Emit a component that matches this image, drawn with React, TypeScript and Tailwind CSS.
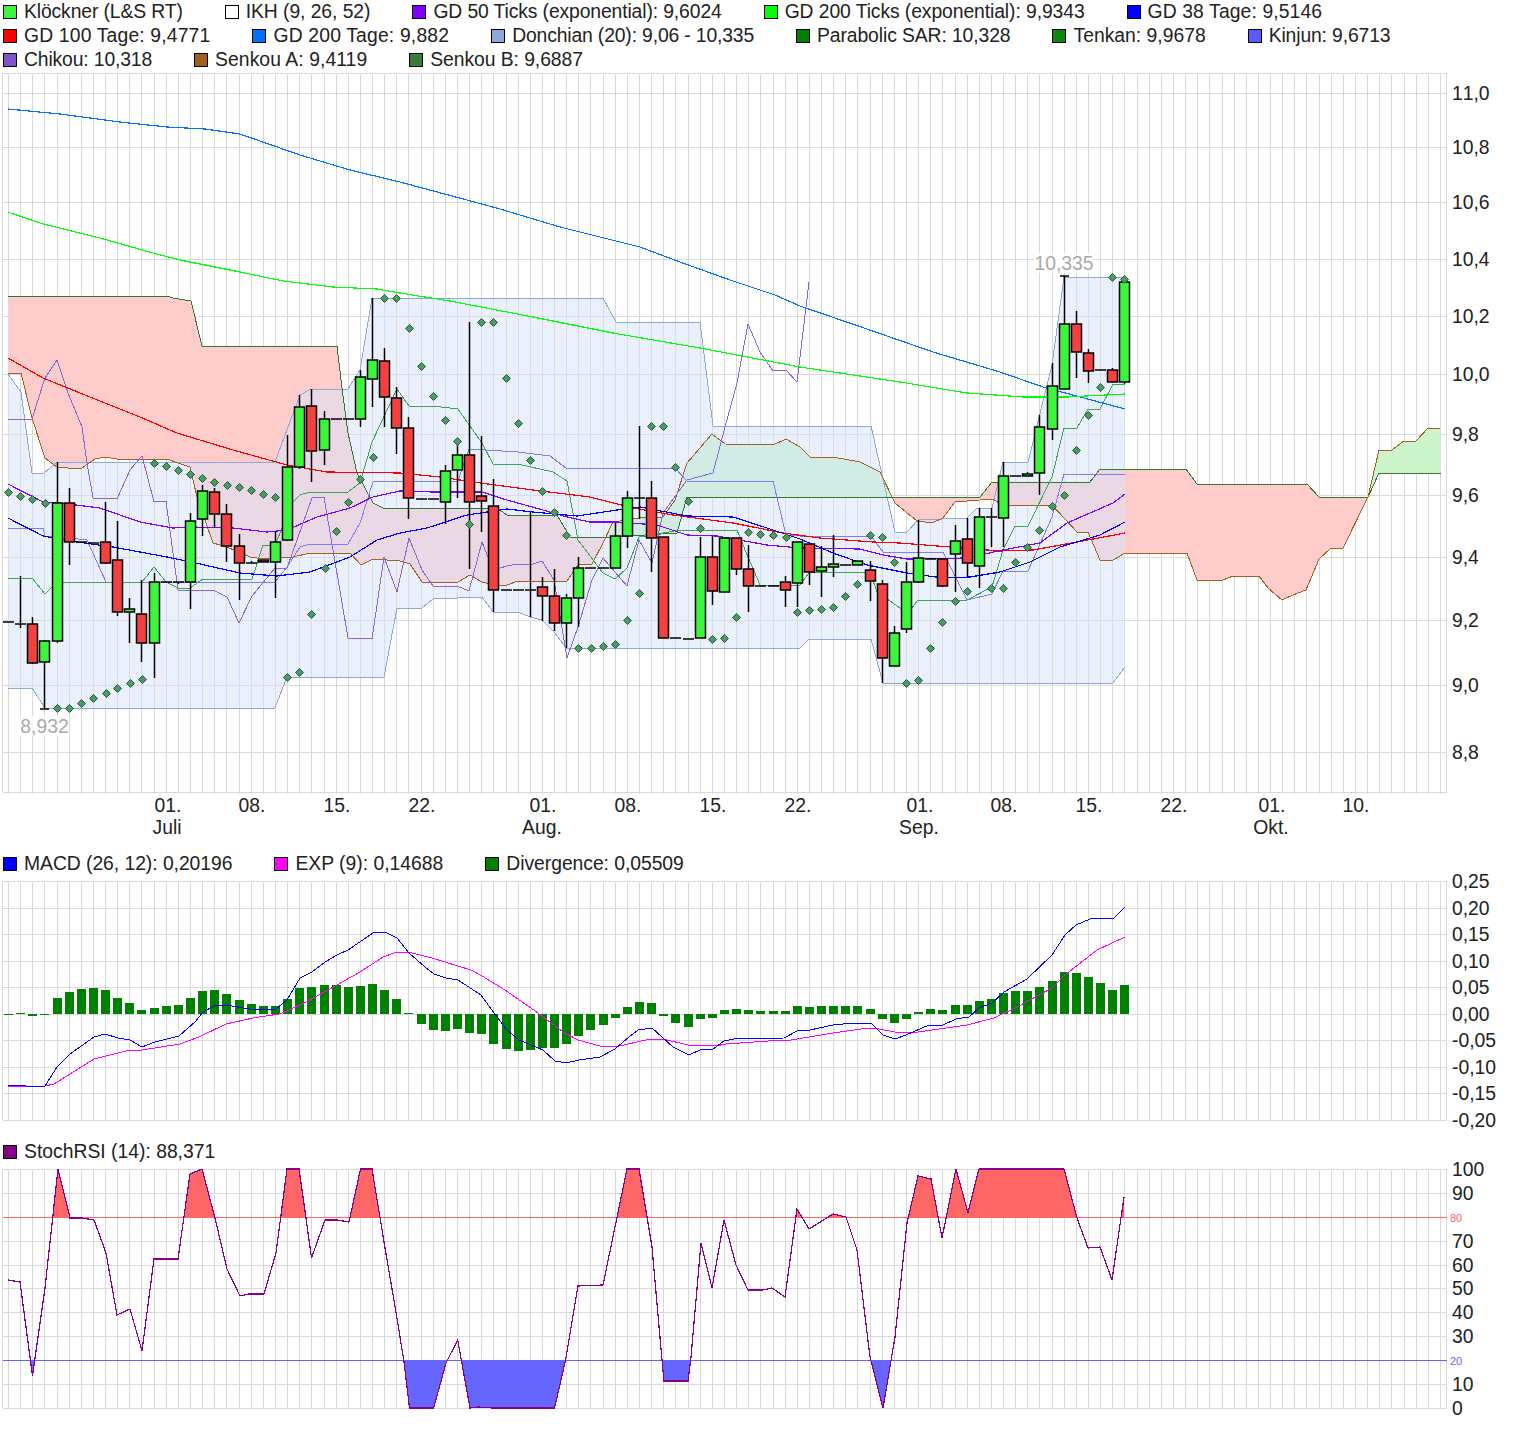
import React from 'react';

const X = (i: number) => Math.round(8 + 12.135 * i) + 0.5;
const pts = (a: number[]) => {
  const out: string[] = [];
  for (let i = 0; i < a.length; i += 2) out.push(a[i] + ',' + a[i + 1]);
  return out.join(' ');
};
const revPts = (a: number[]) => {
  const out: string[] = [];
  for (let i = a.length - 2; i >= 0; i -= 2) out.push(a[i] + ',' + a[i + 1]);
  return out.join(' ');
};

const GRID = '#d9d9d9';
const LEFT = 2.5;
const RIGHT = 1446.5;

// all chart data is in page pixels
const gd200 = [8,109,60,114,120,122,167,127,205,129,240,134,300,155,350,170,400,182,467,200,500,209,560,227,640,247,680,262,730,280,775,295,800,306,867,329,933,352,1000,372,1043,387,1125,409];
const gd200exp = [8,212,43,224,100,238,160,255,180,260,240,272,283,281,333,287,377,289,400,293,450,301,533,317,613,333,700,348,800,367,900,382,967,393,1023,397,1067,397,1125,394];
const senkouB = [8,296,167,296,173,298,191,301,202,346,337,346,342,388,348,433,357,473,373,503,383,508,497,508,507,515,557,515,570,537,613,537,677,533,687,497,980,497,992,482,1090,482,1100,469,1186,469,1197,484,1307,484,1319,497,1368,497,1379,473,1441,473];
const senkouA = [8,373,21,373,32,418,45,458,57,467,68,468,82,468,95,459,105,457,117,459,167,459,178,463,190,467,197,497,213,543,227,547,250,557,263,559,293,557,310,553,350,553,361,565,373,559,400,561,410,564,422,582,458,582,470,575,482,582,493,585,507,585,518,581,567,581,578,565,592,564,603,543,613,522,640,518,663,517,675,500,687,463,712,434,725,444,773,445,786,439,800,447,810,457,833,457,860,462,880,472,895,503,917,521,932,523,943,518,955,502,992,499,1003,505,1052,505,1077,532,1088,532,1100,560,1113,560,1125,553,1187,553,1197,580,1223,580,1233,576,1259,576,1268,588,1282,600,1293,595,1306,590,1319,559,1331,548,1343,548,1368,497,1379,450,1392,450,1404,441,1416,441,1428,428,1440,428];
const donchUp = [8,374,21,392,32,473,44,473,57,462,275,462,300,395,311,389,348,389,360,370,372,298,603,298,616,322,700,322,713,426,871,426,895,532,907,532,918,520,967,518,977,508,992,508,1003,462,1028,462,1052,365,1064,277,1125,277];
const donchLo = [8,688,32,688,45,708,275,708,287,677,384,677,397,608,422,608,433,599,482,597,493,612,518,612,530,617,542,620,555,633,566,648,800,648,809,639,871,639,883,683,1113,683,1125,667];
const tenkan = [8,578,32,578,45,594,57,582,142,582,154,567,166,582,178,588,190,588,203,579,252,579,263,545,275,545,293,502,300,495,310,492,348,492,360,483,372,442,397,389,409,406,433,406,458,409,482,443,493,464,518,464,553,472,567,481,578,540,603,573,615,579,627,568,639,537,653,535,679,530,737,530,748,557,760,585,800,585,809,573,822,572,870,572,877,592,900,608,912,608,918,600,967,600,992,587,1003,550,1015,526,1028,526,1052,477,1064,428,1077,428,1088,409,1100,409,1113,384,1125,384];
const kinjun = [8,528,43,528,45,536,52,536,87,540,106,582,275,582,287,567,300,547,310,544,348,544,360,523,373,482,458,481,469,449,518,452,550,456,566,468,675,468,687,481,773,481,786,535,800,536,871,536,883,552,943,552,967,600,992,594,1003,571,1028,571,1052,517,1064,474,1125,474];
const chikou = [8,419,32,419,45,378,57,360,68,393,82,427,87,463,93,498,117,499,130,470,142,456,154,502,166,501,178,590,213,590,227,597,239,623,252,596,275,568,287,568,312,498,324,497,348,638,372,639,384,557,397,592,409,538,422,570,433,586,457,586,469,591,482,542,493,570,507,566,518,564,530,565,542,561,554,580,567,658,578,627,592,580,603,558,627,586,639,540,652,563,663,513,687,480,713,473,725,427,737,383,748,324,760,352,773,371,786,370,797,382,809,282];
const gd50 = [8,484,43,502,60,503,100,508,140,522,173,528,193,527,233,528,267,532,287,530,317,517,350,508,373,497,400,491,433,492,482,492,507,500,543,510,567,517,590,522,617,522,657,525,687,535,717,536,767,545,800,548,860,549,883,555,907,559,967,558,1003,550,1040,543,1067,523,1113,503,1125,494];
const gd38 = [8,518,43,536,77,542,113,547,167,557,200,564,240,573,277,576,310,572,350,557,377,540,400,533,427,528,467,515,507,509,533,512,577,516,617,510,640,507,687,516,733,517,767,528,800,539,833,553,867,565,907,573,943,578,970,577,1000,572,1030,562,1060,547,1100,535,1125,522];
const gd100 = [8,358,43,378,90,397,140,417,177,433,233,450,287,465,327,472,400,473,440,477,473,482,533,490,590,497,633,508,673,515,733,523,783,533,820,538,873,542,900,543,950,547,1000,551,1033,550,1077,542,1125,533];
const sar = [8,492,20,496,32,499,45,503,57,708,69,708,81,703,93,698,106,693,117,688,130,683,142,679,154,463,166,466,178,470,190,474,202,478,214,482,227,485,239,487,251,490,263,494,275,497,287,677,299,672,311,614,325,568,336,531,348,502,360,479,373,457,384,298,396,298,409,328,421,366,433,396,445,420,457,441,469,524,481,322,493,322,506,378,518,423,530,460,542,491,554,512,566,535,578,648,591,648,603,646,615,644,627,620,639,593,651,426,663,426,675,467,688,501,700,528,712,639,724,638,736,617,748,532,760,534,773,535,786,537,797,612,809,610,821,609,833,607,845,596,857,584,870,535,882,537,894,562,906,683,918,680,930,648,942,622,955,601,967,591,991,588,1003,588,1015,562,1027,547,1039,530,1052,506,1064,495,1076,450,1088,415,1100,387,1112,277,1124,279];

// [high, low, bodyTop, bodyBottom, 1 green / -1 red / 0 doji]
const candles: number[][] = [
  [622,622,622,622,0],[576,628,624,624,0],[617,664,624,663,-1],[640,709,641,662,1],[462,643,503,641,1],
  [488,565,503,542,-1],[542,542,542,542,0],[543,543,543,543,0],[502,564,542,563,-1],[521,616,560,612,-1],
  [598,643,609,612,1],[580,662,614,643,-1],[573,678,582,643,1],[582,582,582,582,0],[582,584,582,582,0],
  [513,609,521,582,1],[485,536,491,519,1],[488,528,492,514,-1],[504,562,514,546,-1],[534,600,546,563,-1],
  [561,563,563,563,0],[560,562,560,562,-1],[531,598,542,562,1],[435,541,467,540,1],[395,469,407,467,1],
  [389,482,406,451,-1],[411,465,419,450,1],[419,419,419,419,0],[419,419,419,419,0],[370,427,377,419,1],
  [298,407,360,379,1],[348,427,361,397,-1],[387,454,398,428,-1],[417,519,428,498,-1],[499,499,499,499,0],
  [499,499,499,499,0],[465,524,471,502,1],[443,498,455,470,1],[322,569,455,502,-1],[436,532,496,501,-1],
  [479,612,506,590,-1],[590,590,590,590,0],[590,590,590,590,0],[512,617,590,590,0],[577,621,587,596,-1],
  [569,631,596,623,-1],[594,648,598,623,1],[557,627,568,598,1],[568,568,568,568,0],[568,568,568,568,0],
  [523,568,536,568,1],[491,548,498,536,1],[426,519,498,498,0],[481,572,498,538,-1],[537,638,537,638,-1],
  [638,638,638,638,0],[639,639,639,639,0],[537,638,557,638,1],[536,605,557,591,-1],[538,592,538,592,1],
  [538,575,538,569,-1],[545,612,569,586,-1],[586,586,586,586,0],[586,586,586,586,0],[576,607,582,590,-1],
  [542,607,542,583,1],[544,585,544,572,-1],[546,597,567,571,1],[535,577,564,567,1],[565,565,565,565,0],
  [561,565,561,565,1],[561,601,570,581,-1],[580,683,584,658,-1],[626,666,633,666,1],[562,633,582,629,1],
  [520,583,558,582,1],[559,559,559,559,0],[559,587,559,586,-1],[525,592,541,554,1],[518,577,539,563,-1],
  [508,588,517,566,1],[508,547,517,517,0],[462,547,476,518,1],[476,476,476,476,0],[472,476,474,476,1],
  [415,495,427,473,1],[363,440,386,429,1],[276,389,324,389,1],[311,378,324,352,-1],[349,383,353,371,-1],
  [370,370,370,370,0],[368,382,370,382,-1],[278,384,282,382,1],
];

const macdBars = [1014,1013,1016,1014,998,992,989,988,990,998,1003,1010,1008,1006,1005,998,991,990,994,1000,1004,1006,1006,999,988,987,985,985,987,986,984,990,999,1013,1024,1030,1031,1029,1033,1034,1044,1049,1051,1050,1048,1048,1044,1036,1030,1025,1018,1007,1002,1003,1016,1023,1027,1019,1018,1010,1009,1010,1011,1011,1011,1006,1007,1006,1006,1006,1006,1009,1019,1023,1019,1012,1009,1010,1005,1005,1001,999,993,991,991,987,981,972,973,977,983,990,985];
const macdLine = [8,1086,19,1085,33,1087,45,1086,57,1067,70,1054,94,1037,105,1034,118,1038,130,1040,142,1047,155,1042,179,1036,195,1022,203,1012,214,1006,226,1005,249,1009,276,1009,287,1000,300,978,312,972,325,962,337,955,348,950,373,933,385,932,397,938,409,953,425,967,434,974,446,978,458,980,481,995,494,1013,507,1030,519,1040,543,1050,555,1061,566,1063,579,1060,600,1057,615,1049,629,1037,638,1030,652,1028,673,1047,689,1055,700,1050,713,1049,724,1041,734,1039,784,1038,797,1031,810,1030,833,1025,854,1023,871,1023,883,1035,895,1039,906,1035,929,1025,943,1025,956,1019,969,1017,979,1008,992,1003,1004,992,1027,979,1052,955,1065,935,1076,925,1090,919,1101,918,1113,919,1125,907];
const expLine = [8,1086,45,1086,54,1084,94,1059,126,1051,142,1050,180,1044,199,1037,226,1024,253,1018,279,1014,287,1011,306,1002,337,985,360,972,383,957,397,952,408,952,432,958,471,970,482,976,505,990,538,1013,563,1032,578,1040,600,1046,615,1047,650,1039,663,1039,688,1045,715,1046,726,1044,768,1041,791,1040,833,1033,868,1028,879,1029,895,1032,918,1032,967,1025,994,1018,1017,1007,1052,988,1065,975,1097,950,1125,937];
const stoch = [8,1280,20,1282,32.5,1376,45,1288,58,1169,70,1218,82,1218,94,1220,106,1253,117,1315,130,1309,142,1351,154,1259,178,1259,190,1174,202,1169,215,1218,227,1269,240,1296,249,1294,264,1294,276,1253,287,1169,299,1169,306,1218,311.5,1258,325,1220,337,1220,349,1222,360.5,1169,372,1169,385,1248,396.5,1315,404,1362,409.5,1408,433.6,1408,446,1363,457.7,1340,470,1408,478,1407,492,1408,554.5,1408,565.6,1360,578,1286,603,1285,627,1169,639,1169,652,1247,662,1360,664,1381,688,1381,691,1357,701,1243,712,1288,724,1220,736,1265,748,1290,763,1290,772,1288,785,1297,797,1209,809,1229,833,1214,846,1217,857,1250,870,1357,883,1408,895,1337,907,1223,918,1176,931,1179,942,1238,956,1169,968,1213,979,1169,1064,1169,1077,1218,1088,1248,1100,1247,1112,1280,1124,1197];

const priceTicks: [string, number][] = [['11,0',93],['10,8',147],['10,6',202],['10,4',259],['10,2',316],['10,0',374],['9,8',434],['9,6',495],['9,4',557],['9,2',620],['9,0',685],['8,8',752]];
const macdTicks: [string, number][] = [['0,25',881],['0,20',908],['0,15',934],['0,10',961],['0,05',987],['0,00',1014],['-0,05',1040],['-0,10',1067],['-0,15',1093],['-0,20',1120]];
const stochTicks: [string, number][] = [['100',1169],['90',1193],['70',1241],['60',1265],['50',1288],['40',1312],['30',1336],['10',1384],['0',1408]];
const dates: [number, string, string?][] = [[167,'01.','Juli'],[251,'08.'],[336,'15.'],[421,'22.'],[542,'01.','Aug.'],[627,'08.'],[712,'15.'],[797,'22.'],[919,'01.','Sep.'],[1003,'08.'],[1088,'15.'],[1173,'22.'],[1271,'01.','Okt.'],[1355,'10.']];

type Item = [string, string, string];
const topLegend: Item[] = [
  ['bg-[#3df53d]', 'tracking-[-0.12px]', 'Klöckner (L&S RT)'],
  ['bg-white', 'tracking-[-0.07px]', 'IKH (9, 26, 52)'],
  ['bg-[#8000ff]', 'tracking-[-0.12px]', 'GD 50 Ticks (exponential): 9,6024'],
  ['bg-[#00ff00]', 'tracking-[-0.09px]', 'GD 200 Ticks (exponential): 9,9343'],
  ['bg-[#0000ff]', 'tracking-[0.11px]', 'GD 38 Tage: 9,5146'],
  ['bg-[#ff0000]', 'tracking-[0.16px]', 'GD 100 Tage: 9,4771'],
  ['bg-[#0073ff]', 'tracking-[0.17px]', 'GD 200 Tage: 9,882'],
  ['bg-[#8fa8dc]', 'tracking-[-0.15px]', 'Donchian (20): 9,06 - 10,335'],
  ['bg-[#008000]', 'tracking-[-0.1px]', 'Parabolic SAR: 10,328'],
  ['bg-[#0a8a0a]', 'tracking-normal', 'Tenkan: 9,9678'],
  ['bg-[#5a5aff]', 'tracking-[-0.13px]', 'Kinjun: 9,6713'],
  ['bg-[#7f55cc]', 'tracking-[-0.14px]', 'Chikou: 10,318'],
  ['bg-[#a05f20]', 'tracking-[0.06px]', 'Senkou A: 9,4119'],
  ['bg-[#3a7a3a]', 'tracking-[-0.06px]', 'Senkou B: 9,6887'],
];
const macdLegend: Item[] = [
  ['bg-[#0000ff]', 'tracking-[-0.05px]', 'MACD (26, 12): 0,20196'],
  ['bg-[#ff00ff]', 'tracking-normal', 'EXP (9): 0,14688'],
  ['bg-[#008000]', 'tracking-[-0.05px]', 'Divergence: 0,05509'],
];
const stochLegend: Item[] = [['bg-[#880088]', 'tracking-normal', 'StochRSI (14): 88,371']];

function Legend({ items }: { items: Item[] }) {
  return (
    <div className="flex flex-wrap gap-x-[42px] pl-[3px] text-[19.33px] text-[#222]">
      {items.map(([swatch, tracking, label]) => (
        <div key={label} className="flex h-6 items-center gap-[7px] whitespace-nowrap">
          <span className={`h-[14px] w-[14px] border border-black ${swatch}`} />
          <span className={tracking}>{label}</span>
        </div>
      ))}
    </div>
  );
}

function Grid({ top, bottom, lines, ticks }: { top: number; bottom: number; lines: number[]; ticks?: boolean }) {
  const cols = Array.from({ length: 119 }, (_, i) => X(i));
  return (
    <g stroke={GRID} strokeWidth={1} shapeRendering="crispEdges">
      <line x1={LEFT} x2={LEFT} y1={top} y2={bottom} />
      <line x1={RIGHT} x2={RIGHT} y1={top} y2={bottom} />
      {cols.map((x) => (
        <line key={x} x1={x} x2={x} y1={top} y2={bottom + (ticks ? 2 : 0)} />
      ))}
      {[top, ...lines, bottom].map((y) => (
        <line key={y} x1={LEFT} x2={RIGHT} y1={y + 0.5} y2={y + 0.5} />
      ))}
    </g>
  );
}

function Line({ data, color, width = 1 }: { data: number[]; color: string; width?: number }) {
  return <polyline points={pts(data)} fill="none" stroke={color} strokeWidth={width} shapeRendering="crispEdges" />;
}

function AxisLabels({ ticks }: { ticks: [string, number][] }) {
  return (
    <g fontSize={19.33} fill="#222" className="[font-kerning:none]">
      {ticks.map(([label, y]) => (
        <text key={label} x={1452} y={y + 7}>{label}</text>
      ))}
    </g>
  );
}

function Candles() {
  return (
    <g stroke="#000" strokeWidth={1.5}>
      {candles.map(([hi, lo, top, bot, dir], i) => {
        const x = X(i);
        return (
          <g key={i}>
            {hi !== lo && <line x1={x} x2={x} y1={hi} y2={lo} />}
            {dir === 0 ? (
              <line x1={x - 5.5} x2={x + 5.5} y1={top} y2={top} />
            ) : (
              <rect x={x - 5} y={top} width={10} height={Math.max(bot - top, 2)} fill={dir > 0 ? '#3cf53c' : '#f34040'} />
            )}
          </g>
        );
      })}
      <line x1={1060} x2={1069} y1={276} y2={276} />
      <line x1={40} x2={49} y1={709} y2={709} />
    </g>
  );
}

function Diamonds() {
  const out: React.ReactNode[] = [];
  for (let i = 0; i < sar.length; i += 2) {
    const x = sar[i] + 0.5;
    const y = sar[i + 1] + 0.5;
    out.push(<polygon key={i} points={`${x},${y - 4} ${x + 4},${y} ${x},${y + 4} ${x - 4},${y}`} />);
  }
  return <g fill="#4a9a62" stroke="#2c5c3c" strokeWidth={1}>{out}</g>;
}

function MainChart() {
  const cloud = `${pts(senkouA)} ${revPts(senkouB)}`;
  const band = `${pts(donchUp)} ${revPts(donchLo)}`;
  return (
    <svg width={1520} height={778} viewBox="0 72 1520 778" className="block overflow-visible">
      <defs>
        <clipPath id="cloudRed">
          <rect x={0} y={72} width={606} height={720} />
          <rect x={892} y={72} width={476} height={720} />
        </clipPath>
        <clipPath id="cloudGreen">
          <rect x={606} y={72} width={286} height={720} />
          <rect x={1368} y={72} width={80} height={720} />
        </clipPath>
      </defs>
      <Grid top={73} bottom={792} lines={priceTicks.map((t) => t[1])} ticks />
      <polygon points={cloud} fill="#ffcccc" clipPath="url(#cloudRed)" />
      <polygon points={cloud} fill="#ccf5cc" clipPath="url(#cloudGreen)" />
      <polygon points={band} fill="#d6e3fb" fillOpacity={0.5} />
      <Line data={donchUp} color="#8fa8dc" />
      <Line data={donchLo} color="#8fa8dc" />
      <Line data={senkouB} color="#2f7a2f" />
      <Line data={senkouA} color="#a5621f" />
      <Line data={chikou} color="#8a66d8" />
      <Line data={kinjun} color="#7f7ff5" />
      <Line data={tenkan} color="#3aa655" />
      <Line data={gd200} color="#0073ff" width={1.2} />
      <Line data={gd200exp} color="#00ff00" width={1.2} />
      <Line data={gd100} color="#ff0000" width={1.2} />
      <Line data={gd50} color="#8000ff" width={1.2} />
      <Line data={gd38} color="#0000ff" width={1.2} />
      <Candles />
      <Diamonds />
      <rect x={1034} y={253} width={60} height={20} fill="#fff" fillOpacity={0.8} />
      <rect x={20} y={716} width={49} height={20} fill="#fff" fillOpacity={0.8} />
      <text x={1064} y={269.5} textAnchor="middle" fontSize={19.33} fill="#aaaaaa">10,335</text>
      <text x={44.5} y={732.5} textAnchor="middle" fontSize={19.33} fill="#aaaaaa">8,932</text>
      <AxisLabels ticks={priceTicks} />
      <g fontSize={19.33} fill="#222" textAnchor="middle">
        {dates.map(([x, day, month]) => (
          <g key={x}>
            <text x={x + 1} y={812}>{day}</text>
            {month && <text x={x} y={834}>{month}</text>}
          </g>
        ))}
      </g>
    </svg>
  );
}

function MacdChart() {
  return (
    <svg width={1520} height={264} viewBox="0 876 1520 264" className="block overflow-visible">
      <Grid top={881} bottom={1120} lines={macdTicks.map((t) => t[1])} />
      <g fill="#008000" shapeRendering="crispEdges">
        {macdBars.map((y, i) => {
          const x = X(i);
          const top = Math.min(y, 1014);
          return <rect key={i} x={x - 4.5} y={top} width={9} height={Math.max(Math.abs(y - 1014), 1)} />;
        })}
      </g>
      <Line data={expLine} color="#ff00ff" />
      <Line data={macdLine} color="#0000ff" />
      <AxisLabels ticks={macdTicks} />
    </svg>
  );
}

function StochChart() {
  const line = pts(stoch);
  return (
    <svg width={1520} height={265} viewBox="0 1164 1520 265" className="block overflow-visible">
      <defs>
        <clipPath id="over">
          <rect x={0} y={1160} width={1520} height={57.5} />
        </clipPath>
        <clipPath id="under">
          <rect x={0} y={1360.5} width={1520} height={60} />
        </clipPath>
      </defs>
      <Grid top={1169} bottom={1408} lines={[1193, 1241, 1265, 1288, 1312, 1336, 1384]} />
      <polygon points={`8,1217.5 ${line} 1124,1217.5`} fill="#ff6666" clipPath="url(#over)" />
      <polygon points={`8,1360.5 ${line} 1124,1360.5`} fill="#6666ff" clipPath="url(#under)" />
      <g shapeRendering="crispEdges">
        <line x1={LEFT} x2={RIGHT} y1={1217.5} y2={1217.5} stroke="#ff6666" />
        <line x1={LEFT} x2={RIGHT} y1={1360.5} y2={1360.5} stroke="#6666ff" />
      </g>
      <Line data={stoch} color="#880088" width={1.2} />
      <text x={1450} y={1221.5} fontSize={11} fill="#ff6666">80</text>
      <text x={1450} y={1364.5} fontSize={11} fill="#6666ff">20</text>
      <AxisLabels ticks={stochTicks} />
    </svg>
  );
}

export default function App() {
  return (
    <div className="h-[1429px] w-[1520px] overflow-hidden bg-white [font-family:'Liberation_Sans',Arial,sans-serif]">
      <Legend items={topLegend} />
      <MainChart />
      <div className="h-[26px] pt-[2px]">
        <Legend items={macdLegend} />
      </div>
      <MacdChart />
      <Legend items={stochLegend} />
      <StochChart />
    </div>
  );
}
